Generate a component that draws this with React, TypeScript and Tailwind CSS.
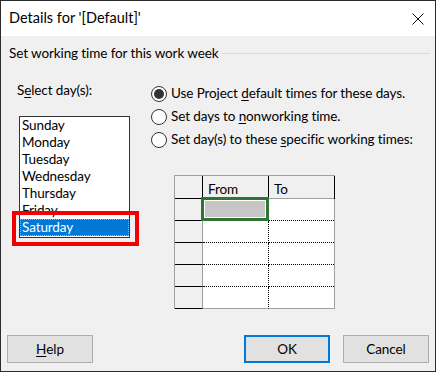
const days = ['Sunday', 'Monday', 'Tuesday', 'Wednesday', 'Thursday', 'Friday', 'Saturday'];

function Radio({ checked, children }: { checked?: boolean; children: React.ReactNode }) {
  return (
    <div className="flex items-start h-[17px]">
      <div className="mt-[1px] w-[16px] h-[16px] rounded-full border border-[#333] bg-white flex items-center justify-center shrink-0">
        {checked && <div className="w-[10px] h-[10px] rounded-full bg-[#333]" />}
      </div>
      <span className="ml-[4px] whitespace-nowrap">{children}</span>
    </div>
  );
}

function Button({ children, primary }: { children: React.ReactNode; primary?: boolean }) {
  return (
    <div
      className={
        primary
          ? 'w-[86px] h-[28px] border-2 border-[#0078d7] bg-[#e1e1e1] flex items-center justify-center'
          : 'w-[86px] h-[28px] border border-[#adadad] bg-[#e1e1e1] flex items-center justify-center'
      }
    >
      {children}
    </div>
  );
}

export default function App() {
  const rows = [0, 1, 2, 3, 4];

  return (
    <div className="w-[436px] h-[372px] border border-[#2b2b2b] bg-[#f0f0f0] flex flex-col font-['Lato',sans-serif] text-[13.5px] tracking-[-0.1px] leading-[17px] text-black">
      {/* title bar */}
      <div className="h-[35px] bg-white flex items-start justify-between pl-[8px] pr-[11px]">
        <span className="mt-[7px] text-[14.5px] leading-[20px] tracking-normal">Details for '[Default]'</span>
        <svg className="mt-[12px]" width="12" height="12" viewBox="0 0 12 12">
          <path d="M0.5 0.5L11.5 11.5M11.5 0.5L0.5 11.5" stroke="#111" strokeWidth="1" fill="none" />
        </svg>
      </div>

      <div className="flex-1 flex flex-col pl-[8px] pr-[5px]">
        <div className="mt-[9px] flex items-center">
          <span className="whitespace-nowrap">Set working time for this work week</span>
          <div className="ml-[4px] flex-1 h-px bg-[#dcdcdc]" />
        </div>

        <div className="mt-[20px] flex">
          {/* days */}
          <div className="w-[142px] shrink-0 pl-[8px] flex flex-col">
            <span>
              S<span className="underline underline-offset-2">e</span>lect day(s):
            </span>
            <div className="relative mt-[17px] ml-[2px] w-[111px] h-[122px] border border-[#333] bg-white">
              {days.map((d, i) => (
                <div
                  key={d}
                  className={
                    i === 6
                      ? 'h-[17px] pl-[1px] bg-[#0078d7] text-white border border-dotted border-[#f3a640] leading-[15px]'
                      : 'h-[17px] pl-[2px]'
                  }
                >
                  {d}
                </div>
              ))}
              <div className="absolute left-[-8px] top-[94px] w-[127px] h-[35px] border-4 border-[#f00000]" />
            </div>
          </div>

          {/* options */}
          <div className="pt-[3px] flex flex-col">
            <div className="flex flex-col gap-[6px]">
              <Radio checked>
                Use Project <span className="underline underline-offset-2">d</span>efault times for these days.
              </Radio>
              <Radio>
                Set days to <span className="underline underline-offset-2">n</span>onworking time.
              </Radio>
              <Radio>
                Set day(s) to these <span className="underline underline-offset-2">s</span>pecific working times:
              </Radio>
            </div>

            <div className="mt-[27px] ml-[23px] w-[161px] border-l border-t border-[#a0a0a0] bg-white">
              <div className="flex h-[23px] border-r border-black">
                <div className="w-[28px] bg-[#f0f0f0] border-r border-b border-black" />
                <div className="w-[66px] bg-[#f0f0f0] border-r border-r-black border-b border-b-[#a0a0a0] pl-[5px] pt-[5px]">From</div>
                <div className="w-[65px] bg-[#f0f0f0] border-b border-[#a0a0a0] pl-[5px] pt-[5px]">To</div>
              </div>
              {rows.map((r) => (
                <div key={r} className="flex h-[22px] border-r border-[#a0a0a0]">
                  <div className="w-[28px] bg-[#f0f0f0] border-b border-b-black border-r border-r-[#a0a0a0]" />
                  <div
                    className={
                      r === 4
                        ? 'relative w-[66px] border-r border-b border-dotted border-r-black border-b-[#a0a0a0] [border-bottom-style:solid]'
                        : 'relative w-[66px] border-r border-b border-dotted border-black'
                    }
                  >
                    {r === 0 && (
                      <div className="absolute -left-[2px] -top-[2px] -right-[1px] -bottom-[1px] border-[3px] border-[#2f7432] bg-[#c6c6c6] shadow-[inset_0_0_0_1px_white]" />
                    )}
                  </div>
                  <div
                    className={
                      r === 4
                        ? 'w-[65px] border-b border-[#a0a0a0]'
                        : 'w-[65px] border-b border-dotted border-black'
                    }
                  />
                </div>
              ))}
            </div>
          </div>
        </div>

        <div className="flex-1" />

        <div className="flex items-center pb-[8px] pr-[1px] ml-[-2px]">
          <Button>
            <span className="underline underline-offset-2">H</span>elp
          </Button>
          <div className="flex-1" />
          <Button primary>OK</Button>
          <div className="w-[13px]" />
          <Button>Cancel</Button>
        </div>
      </div>
    </div>
  );
}
